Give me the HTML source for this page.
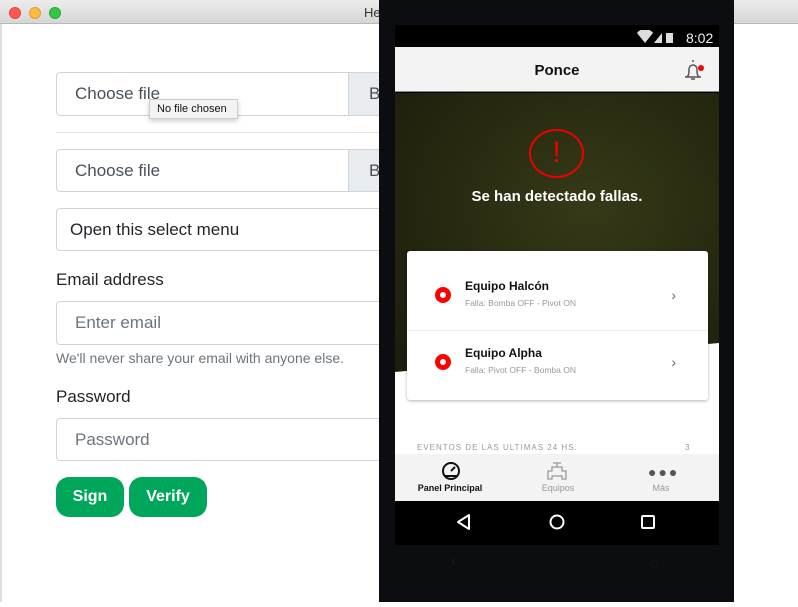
<!DOCTYPE html>
<html><head><meta charset="utf-8"><style>
*{margin:0;padding:0;box-sizing:border-box}
body{width:798px;height:607px;overflow:hidden;background:#fff;font-family:"Liberation Sans",sans-serif;position:relative}
.abs{position:absolute}
.title{left:0;top:0;width:798px;height:24px;background:linear-gradient(#ececec,#d6d6d6);border-bottom:1px solid #b8b8b8}
.dot{width:12px;height:12px;border-radius:50%;top:7px}
.inp{position:absolute;left:56px;width:340px;border:1px solid #ced4da;border-radius:4px;font-size:17px;color:#495057;padding-left:18px;display:flex;align-items:center}
.btnB{position:absolute;left:348px;width:40px;background:#e9ecef;border-left:1px solid #ced4da;font-size:17px;color:#495057;padding-left:20px;display:flex;align-items:center}
.lbl{position:absolute;left:56px;font-size:17px;color:#212529}
.gbtn{position:absolute;top:477px;height:40px;background:#00a65a;color:#fff;font-weight:bold;font-size:16px;border-radius:13px;display:flex;align-items:center;justify-content:center}
.phone{left:379px;top:0;width:355px;height:602px;background:#0b0d11}
.scr{left:395px;top:25px;width:324px;height:520px;background:#000}
.row{position:absolute;left:0;width:301px;height:70px}
.ring{position:absolute;left:28px;width:16px;height:16px;border:5px solid #f00;border-radius:50%}
.rt{position:absolute;left:58px;font-size:12px;font-weight:bold;color:#111}
.rs{position:absolute;left:58px;font-size:8.5px;color:#999}
.chev{position:absolute;right:32px;font-size:14px;color:#666}
</style></head><body>
<div class="abs title"></div>
<div class="abs dot" style="left:9px;background:#fc5753;border:1px solid #df4744"></div>
<div class="abs dot" style="left:29px;background:#fdbc40;border:1px solid #de9f34"></div>
<div class="abs dot" style="left:49px;background:#33c748;border:1px solid #27aa35"></div>
<div class="abs" style="left:364px;top:5px;font-size:13px;color:#333">He</div>
<div class="abs" style="left:0;top:24px;width:2px;height:578px;background:#ddd"></div>

<div class="inp" style="top:72px;height:44px">Choose file</div>
<div class="btnB" style="top:73px;height:42px">B</div>
<div class="abs" style="left:149px;top:99px;width:89px;height:20px;background:#f3f3f3;border:1px solid #ccc;box-shadow:0 2px 5px rgba(0,0,0,.2);font-size:11px;color:#111;padding:3px 0 0 7px">No file chosen</div>
<div class="abs" style="left:56px;top:132px;width:330px;height:1px;background:#e3e3e3"></div>
<div class="inp" style="top:149px;height:43px">Choose file</div>
<div class="btnB" style="top:150px;height:41px">B</div>
<div class="inp" style="top:208px;height:43px;padding-left:13px;color:#212529">Open this select menu</div>
<div class="lbl" style="top:270px">Email address</div>
<div class="inp" style="top:301px;height:44px;color:#6c757d">Enter email</div>
<div class="abs" style="left:56px;top:350px;font-size:14px;color:#6c757d">We'll never share your email with anyone else.</div>
<div class="lbl" style="top:387px">Password</div>
<div class="inp" style="top:418px;height:43px;color:#6c757d">Password</div>
<div class="gbtn" style="left:56px;width:68px">Sign</div>
<div class="gbtn" style="left:129px;width:78px">Verify</div>

<div class="abs phone"></div>
<div class="abs scr"></div>
<svg class="abs" style="left:636px;top:30px" width="48" height="14"><path d="M1 3a10 10 0 0 1 16 0L9 13z" fill="#ddd"/><path d="M18 13L26 3v10z" fill="#ddd"/><rect x="30" y="3" width="7" height="10" fill="#ddd"/></svg>
<div class="abs" style="left:686px;top:30px;font-size:14px;color:#eee">8:02</div>
<div class="abs" style="left:395px;top:47px;width:324px;height:45px;background:#f3f3f3;border-bottom:1px solid #888"></div>
<div class="abs" style="left:395px;top:62px;width:324px;text-align:center;font-size:15px;font-weight:bold;color:#111">Ponce</div>
<svg class="abs" style="left:682px;top:58px" width="24" height="24"><path d="M3 19h16M5 19c2-2 2-4 2-8a4 4 0 0 1 8 0c0 4 0 6 2 8M11 4v-2M9 21h4" stroke="#555" stroke-width="1.5" fill="none"/><circle cx="19" cy="10" r="3" fill="#f00"/></svg>
<div class="abs" style="left:395px;top:93px;width:324px;height:280px;background:radial-gradient(ellipse at 60% 40%,#363a17,#22240e 70%,#1b1d0e);clip-path:polygon(0 0,100% 0,100% 250px,0 280px)"></div>
<div class="abs" style="left:395px;top:343px;width:324px;height:111px;background:#fff;clip-path:polygon(0 29px,100% 0,100% 111px,0 111px)"></div>
<div class="abs" style="left:529px;top:129px;width:55px;height:49px;border:2px solid #e00;border-radius:50%;color:#e00;font-size:30px;text-align:center;line-height:44px">!</div>
<div class="abs" style="left:395px;top:188px;width:324px;text-align:center;color:#fff;font-size:15px;font-weight:bold">Se han detectado fallas.</div>
<div class="abs" style="left:407px;top:251px;width:301px;height:149px;background:#fff;border-radius:3px;box-shadow:0 1px 3px rgba(0,0,0,.3)">
 <div class="row" style="top:10px"><div class="ring" style="top:26px"></div><div class="rt" style="top:18px">Equipo Halcón</div><div class="rs" style="top:37px">Falla: Bomba OFF - Pivot ON</div><div class="chev" style="top:26px">›</div></div>
 <div style="position:absolute;left:0;top:79px;width:301px;height:1px;background:#eee"></div>
 <div class="row" style="top:78px"><div class="ring" style="top:25px"></div><div class="rt" style="top:17px">Equipo Alpha</div><div class="rs" style="top:36px">Falla: Pivot OFF - Bomba ON</div><div class="chev" style="top:25px">›</div></div>
</div>
<div class="abs" style="left:417px;top:443px;font-size:8px;letter-spacing:1px;color:#999">EVENTOS DE LAS ULTIMAS 24 HS.</div>
<div class="abs" style="left:685px;top:443px;font-size:8px;color:#999">3</div>
<div class="abs" style="left:395px;top:454px;width:324px;height:47px;background:#f3f3f3"></div>
<svg class="abs" style="left:440px;top:461px" width="22" height="20"><circle cx="11" cy="10" r="8" stroke="#111" stroke-width="2" fill="none"/><path d="M4 15h14M11 10l4-4" stroke="#111" stroke-width="2"/></svg>
<div class="abs" style="left:395px;top:483px;width:110px;text-align:center;font-size:9px;font-weight:bold;color:#111">Panel Principal</div>
<svg class="abs" style="left:546px;top:461px" width="22" height="20"><path d="M7 2h8M11 2v4M6 6h10v4h4v8h-4v-3H6v3H2v-8h4z" stroke="#999" stroke-width="1.3" fill="none"/></svg>
<div class="abs" style="left:503px;top:483px;width:110px;text-align:center;font-size:9px;color:#999">Equipos</div>
<div class="abs" style="left:648px;top:467px;font-size:14px;color:#555;letter-spacing:2px;line-height:10px">●●●</div>
<div class="abs" style="left:606px;top:483px;width:110px;text-align:center;font-size:9px;color:#999">Más</div>
<svg class="abs" style="left:455px;top:510px" width="210" height="24"><path d="M14 5v14L3 12z" stroke="#fff" stroke-width="2" fill="none" stroke-linejoin="round"/><circle cx="102" cy="12" r="6.5" stroke="#fff" stroke-width="2" fill="none"/><rect x="187" y="6" width="12" height="12" rx="1" stroke="#fff" stroke-width="2" fill="none"/></svg>
<div class="abs" style="left:451px;top:553px;font-size:16px;color:#1a1c20">‹</div>
<div class="abs" style="left:650px;top:554px;font-size:14px;color:#1a1c20">⌂</div>
</body></html>
